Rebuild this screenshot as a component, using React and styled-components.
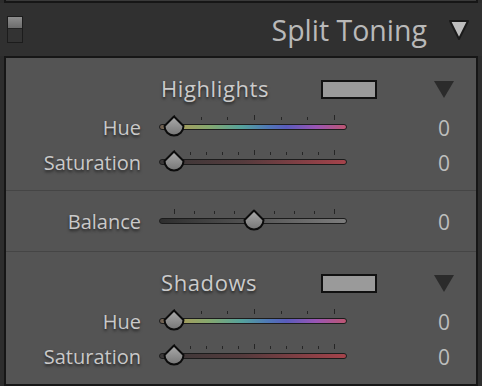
import React from 'react'
import styled, { createGlobalStyle } from 'styled-components'

const GlobalStyle = createGlobalStyle`
  html, body {
    margin: 0;
    padding: 0;
    background: #2d2d2d;
  }
  body {
    font-family: "Open Sans", "Noto Sans", sans-serif;
  }
`

const HUE = 'linear-gradient(to right, #6a5a50 0%, #a89c5c 10%, #86a86e 26%, #55a29c 44%, #4f78b6 58%, #5a5cbc 68%, #9a55b4 84%, #bd5672 100%)'
const SAT = 'linear-gradient(to right, #393737 0%, #553b3d 45%, #a5434b 100%)'
const BAL = 'linear-gradient(to right, #2e2e2e 0%, #555 50%, #7c7c7c 100%)'

const Thumb = ({ pos }) => (
  <ThumbWrap style={{ left: 16 + pos * 160 - 12 }}>
    <svg width="24" height="23" viewBox="0 0 24 23">
      <defs>
        <linearGradient id="tg" x1="0" y1="0" x2="0" y2="1">
          <stop offset="0" stopColor="#ababab" />
          <stop offset="1" stopColor="#767676" />
        </linearGradient>
      </defs>
      <path
        d="M12 1.5 L21.5 11 A9.5 9.5 0 0 1 2.5 11 Z"
        fill="url(#tg)"
        stroke="#0c0c0c"
        strokeWidth="2"
        strokeLinejoin="round"
      />
    </svg>
  </ThumbWrap>
)

const Slider = ({ ticks, tall, track, pos }) => (
  <SliderBox>
    <Ticks>
      {Array.from({ length: ticks + 1 }).map((_, i) => (
        <Tick key={i} $tall={tall.includes(i)} />
      ))}
    </Ticks>
    <Track $bg={track} />
    <Thumb pos={pos} />
  </SliderBox>
)

const Row = ({ label, ...rest }) => (
  <RowLine>
    <Label>{label}</Label>
    <Slider {...rest} />
    <Value>0</Value>
  </RowLine>
)

const ToneSection = ({ title }) => (
  <Section>
    <SectionHead>
      <SectionTitle>{title}</SectionTitle>
      <Swatch />
      <ArrowCell>
        <DarkArrow />
      </ArrowCell>
    </SectionHead>
    <Row label="Hue" ticks={6} tall={[0, 3, 6]} track={HUE} pos={0} />
    <Row label="Saturation" ticks={10} tall={[0, 5, 10]} track={SAT} pos={0} />
  </Section>
)

const App = () => {
  return (
    <>
      <GlobalStyle />
      <PrevPanel />
      <Header>
        <Toggle>
          <ToggleOn />
        </Toggle>
        <HeaderTitle>Split Toning</HeaderTitle>
        <svg width="22" height="22" viewBox="0 0 22 22">
          <polygon points="2,2 20,2 11,20" fill="#bdbdbd" stroke="#1a1a1a" strokeWidth="2" strokeLinejoin="round" />
        </svg>
      </Header>
      <Panel>
        <ToneSection title="Highlights" />
        <BalanceSection>
          <Row label="Balance" ticks={8} tall={[0, 8]} track={BAL} pos={0.5} />
        </BalanceSection>
        <ToneSection title="Shadows" />
      </Panel>
      <Bottom />
    </>
  )
}

const PrevPanel = styled.div`
  height: 1px;
  margin: 0 4px;
  background: #3a3a3a;
  border: 2px solid #161616;
  border-top: none;
`

const Header = styled.div`
  height: 53px;
  display: flex;
  align-items: center;
  padding: 0 12px 0 7px;
  background: #303030;
`

const Toggle = styled.div`
  width: 14px;
  height: 25px;
  border: 1px solid #1c1c1c;
  background: #333;
  display: flex;
  flex-direction: column;
`

const ToggleOn = styled.div`
  height: 11px;
  background: linear-gradient(#8e8e8e, #6c6c6c);
  border-bottom: 1px solid #222;
`

const HeaderTitle = styled.div`
  flex: 1;
  text-align: right;
  margin-right: 21px;
  font-size: 28.5px;
  color: #b9b9b9;
`

const Panel = styled.div`
  margin: 0 4px;
  border: 2px solid #161616;
  background: #545454;
`

const Section = styled.div`
  padding: 20px 0 10px;
  & + & {
    border-top: 1px solid #454545;
  }
`

const BalanceSection = styled.div`
  padding: 13px 0 12px;
  border-top: 1px solid #454545;
  border-bottom: 1px solid #454545;
`

const SectionHead = styled.div`
  height: 22px;
  margin-bottom: 10px;
  display: flex;
  align-items: center;
  padding-left: 155px;
`

const SectionTitle = styled.div`
  width: 160px;
  margin-top: -3px;
  font-size: 22px;
  letter-spacing: 0.6px;
  color: #cbcbcb;
  text-shadow: 0 2px 3px rgba(0, 0, 0, 0.6);
`

const Swatch = styled.div`
  width: 52px;
  height: 15px;
  border: 2px solid #111;
  background: #9a9a9a;
`

const ArrowCell = styled.div`
  margin-left: auto;
  width: 40px;
  margin-right: 12px;
  display: flex;
  justify-content: center;
`

const DarkArrow = styled.div`
  width: 0;
  height: 0;
  border-left: 10px solid transparent;
  border-right: 10px solid transparent;
  border-top: 17px solid #2b2b2b;
`

const RowLine = styled.div`
  height: 35px;
  display: flex;
  align-items: center;
`

const Label = styled.div`
  width: 135px;
  text-align: right;
  font-size: 20px;
  color: #c9c9c9;
  text-shadow: 0 2px 3px rgba(0, 0, 0, 0.6);
`

const SliderBox = styled.div`
  position: relative;
  width: 190px;
  height: 35px;
  margin-left: 17px;
`

const Ticks = styled.div`
  position: absolute;
  left: 16px;
  width: 161px;
  top: 5px;
  height: 5px;
  display: flex;
  justify-content: space-between;
  align-items: flex-end;
`

const Tick = styled.div`
  width: 1px;
  height: ${p => (p.$tall ? 5 : 3)}px;
  background: #262626;
`

const Track = styled.div`
  position: absolute;
  left: 1px;
  right: 1px;
  top: 14px;
  height: 4px;
  border: 1px solid #1c1c1c;
  border-radius: 3px;
  background: ${p => p.$bg};
`

const ThumbWrap = styled.div`
  position: absolute;
  top: 5px;
  width: 24px;
  height: 23px;
  & svg {
    display: block;
  }
`

const Value = styled.div`
  margin-left: auto;
  width: 40px;
  margin-right: 12px;
  text-align: center;
  font-size: 21px;
  color: #bdbdbd;
`

const Bottom = styled.div`
  height: 4px;
`

export default App
